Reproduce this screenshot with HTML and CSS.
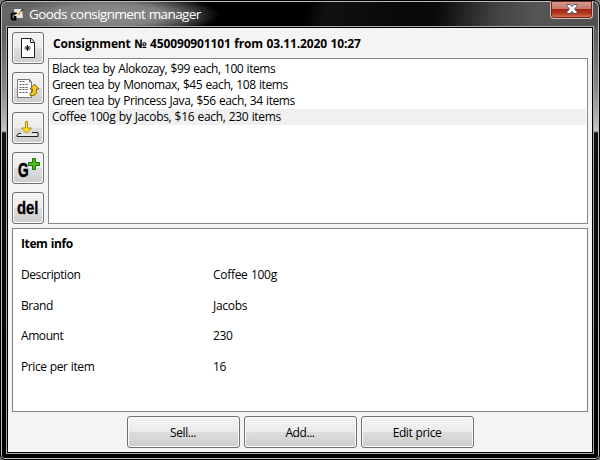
FILE: index.html
```html
<!DOCTYPE html>
<html lang="en">
<head>
<meta charset="utf-8">
<title>Goods consignment manager</title>
<link rel="stylesheet" href="styles.css">
</head>
<body>
<div class="window">
  <header class="titlebar">
    <svg class="app-icon" width="14" height="14" viewBox="0 0 14 14">
      <path d="M4 1h8l1 9H5z" fill="#e8e8e8"/>
      <path d="M6 6V5.500H2.500L1.500 6.500v4l1 1h3V9H4" fill="none" stroke="#000" stroke-width="1.800"/>
      <path d="M8 7l3-4" stroke="#e9a51d" stroke-width="1.5"/><path d="M11 3l2-2" stroke="#333" stroke-width="1.5"/>
    </svg>
    <h1 class="title">Goods consignment manager</h1>
    <button class="close" aria-label="Close">
      <svg width="12" height="10" viewBox="0 0 12 10"><path d="M1 .5h3.2L6 2.6 7.8.5H11v1.8L8.5 5 11 7.7v1.8H7.8L6 7.4 4.2 9.5H1V7.7L3.500 5 1 2.300z" fill="#fff" stroke="#4d4e60"/></svg>
    </button>
  </header>
  <main class="client">
    <section class="top">
      <nav class="tools">
        <button class="tool"><svg width="30" height="30" viewBox="0 0 30 30"><path d="M8.500 5.500h10l3 4v15h-13z" fill="#fff" stroke="#222"/><path d="M17.500 5.500v4h4" fill="none" stroke="#222"/><path d="M14.500 12v6M11.500 15h6M12.500 13l4 4M16.500 13l-4 4" stroke="#111"/></svg></button>
        <button class="tool"><svg width="30" height="30" viewBox="0 0 30 30"><path d="M4.500 6.500h12l2 2v16h-14z" fill="#fff" stroke="#777"/><path d="M16.500 6.500v2.500h2" fill="none" stroke="#777"/><path d="M6.500 8.500h5M6.500 11.500h9M6.500 14.500h9M6.500 16.500h9M6.500 19.500h8" stroke="#555" stroke-dasharray="2 1"/><path d="M17 22.500h2.500c2.500 0 4-1.500 4-4V16H26L21.500 11 17 16h2.500v2c0 1.500-1 2-2.500 2z" fill="#f2cb1d" stroke="#6b5200" stroke-width=".8"/></svg></button>
        <button class="tool"><svg width="30" height="30" viewBox="0 0 30 30"><path d="M12.500 8.500h2V15h4l-5 5-5-5h4z" fill="#ffe11d" stroke="#a07900" stroke-width=".8"/><path d="M8 20.500H6l-2 1.500v1.500h21v-4h-6" fill="none" stroke="#222"/><path d="M6 22h18" stroke="#fff"/></svg></button>
        <button class="tool tool-g"><span>G</span><svg class="plus" width="12" height="12" viewBox="0 0 12 12"><path d="M4.500.5h3v4h4v3h-4v4h-3v-4h-4v-3h4z" fill="#4ebd19" stroke="#246a08"/></svg></button>
        <button class="tool tool-del"><span>del</span></button>
      </nav>
      <div class="consignment">
        <h2 class="heading">Consignment № 450090901101 from 03.11.2020 10:27</h2>
        <ul class="items">
          <li>Black tea by Alokozay, $99 each, 100 items</li>
          <li>Green tea by Monomax, $45 each, 108 items</li>
          <li>Green tea by Princess Java, $56 each, 34 items</li>
          <li class="selected">Coffee 100g by Jacobs, $16 each, 230 items</li>
        </ul>
      </div>
    </section>
    <section class="info">
      <h3 class="info-title">Item info</h3>
      <dl class="fields">
        <dt>Description</dt><dd>Coffee 100g</dd>
        <dt>Brand</dt><dd>Jacobs</dd>
        <dt>Amount</dt><dd>230</dd>
        <dt>Price per item</dt><dd>16</dd>
      </dl>
    </section>
    <footer class="actions">
      <button class="action">Sell...</button>
      <button class="action">Add...</button>
      <button class="action">Edit price</button>
    </footer>
  </main>
</div>
</body>
</html>
```

FILE: styles.css
```css
* { box-sizing: border-box; margin: 0; padding: 0; }
html { background: #777; }
body { width: 600px; height: 460px; overflow: hidden; font: 12px/16px "Open Sans", "Noto Sans", sans-serif; letter-spacing: -.42px; word-spacing: .6px; color: #000; }
button { font: inherit; color: inherit; letter-spacing: inherit; word-spacing: inherit; }
.window {
  width: 600px; height: 460px; padding: 0 6px 6px;
  border: 1px solid #000; border-radius: 7px 7px 5px 5px;
  box-shadow: inset 0 0 0 1px #bdbdbd;
  background: linear-gradient(#555 0, #606060 35px, #858585 85px, #c4c4c4 130px, #111 132px, #000 100%);
}
.titlebar {
  display: flex; align-items: center; height: 25px; margin: 1px -5px 0; padding-left: 8px;
  border-radius: 6px 6px 0 0;
  background:
    radial-gradient(ellipse 112px 22px at 106px 13px, #8c8c8c 0, #808080 50%, transparent 100%),
    linear-gradient(100deg, #666 0, #555 24px, #333 110px, #000 205px, #000 300px, #111 320px, #080808 405px, #0a0a0a 430px, #444 490px, #555 530px, #505050 100%);
}
.app-icon { margin-top: 1px; }
.title { margin: -2px 0 0 5px; font-size: 13.5px; line-height: 20px; font-weight: 400; color: #fff; letter-spacing: -.6px; }
.close {
  display: flex; align-items: center; justify-content: center; align-self: flex-start;
  width: 43px; height: 18px; margin: -1px 5px 0 auto; padding-bottom: 1px; border: 1px solid #d7b7b1; border-top: 0; border-radius: 0 0 4px 4px;
  background: linear-gradient(#d3a196 0, #c7786a 45%, #a52511 50%, #b93b22 75%, #df8060 100%);
  box-shadow: inset 0 0 0 1px #70281d;
}
.client { width: 586px; height: 426px; border: 1px solid #000; outline: 1px solid #aaa; background: #f4f4f4; padding: 4px; }
.top { display: flex; gap: 4px; height: 192px; }
.tools { display: flex; flex-direction: column; gap: 8px; width: 32px; }
.tool { display: flex; align-items: center; justify-content: center; width: 32px; height: 32px; }
.tool, .action { border: 1px solid #707070; border-radius: 3px; background: linear-gradient(#f3f3f3 0, #ebebeb 50%, #ddd 50%, #cdcdcd 100%); box-shadow: inset 0 0 0 1px #fafafa; }
.tool-g, .tool-del { font: bold 20px/26px "Liberation Sans", sans-serif; letter-spacing: 0; word-spacing: 0; }
.tool-g { position: relative; justify-content: flex-start; padding-left: 5px; }
.tool-g span { transform: translateY(2px) scaleX(.68); transform-origin: left; -webkit-text-stroke: .6px #000; }
.plus { position: absolute; left: 15px; top: 5px; }
.tool-del span { font-size: 19px; transform: scaleX(.78); -webkit-text-stroke: .3px #000; }
.consignment { flex: 1; }
.heading { height: 26px; padding: 4px 0 0 5px; font-size: 12px; line-height: 16px; font-weight: 700; letter-spacing: -.14px; }
.items { height: 166px; border: 1px solid #828790; background: #fff; padding: 2px 1px; list-style: none; letter-spacing: -.42px; }
.items li { height: 16px; padding-left: 2px; }
.items .selected { background: #f0f0f0; letter-spacing: -.35px; }
.info { height: 184px; margin-top: 4px; padding: 7px 8px; border: 1px solid #828282; background: #fff; }
.info-title { font-size: 12px; line-height: 16px; font-weight: 700; letter-spacing: -.4px; }
.fields { display: grid; grid-template-columns: 192px 1fr; grid-auto-rows: 30.700px; margin-top: 15px; }
.fields dd { letter-spacing: -.3px; }
.actions { display: flex; justify-content: center; gap: 4px; margin-top: 4px; }
.action { width: 113px; height: 32px; padding-top: 1px; }
```
